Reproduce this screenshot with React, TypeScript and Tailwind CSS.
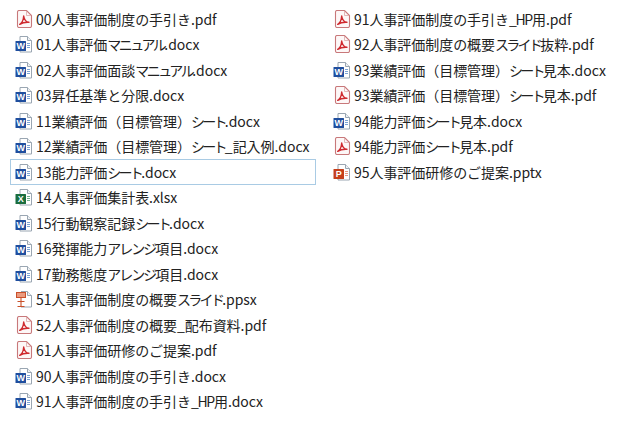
const jp = "font-['Noto_Sans_CJK_JP','Noto_Sans',sans-serif]";

function Pdf() {
  return (
    <svg width="18" height="18" viewBox="0 0 18 18" className="shrink-0">
      <path d="M2.500 2a1.500 1.500 0 0 1 1.500-1.500h7.500l5 5v10.500a1.500 1.500 0 0 1-1.500 1.500h-11a1.500 1.500 0 0 1-1.500-1.500z" fill="#fdf7f7" stroke="#c8787a" strokeWidth="1.100" />
      <path d="M11.500 .8v4.700h4.700" fill="none" stroke="#dca8a8" strokeWidth="0.800" />
      <path d="M4.700 14.300c2.300-1.200 3.700-4.200 4-8.300 .5 3.400 2.200 5.900 5.200 6.300-3.500-.2-6.600 .4-9.200 2z" fill="none" stroke="#cf2a2f" strokeWidth="1.400" strokeLinejoin="round" />
    </svg>
  );
}

function Office({ color, letter, line }: { color: string; letter: string; line: string }) {
  return (
    <svg width="18" height="18" viewBox="0 0 18 18" className="shrink-0">
      <path d="M5 1.500h7.500l4 4v11.500h-11.500z" fill="#fff" stroke="#9aa6b2" strokeWidth="1" />
      <path d="M12.500 1.500v4h4" fill="#eef1f4" stroke="#9aa6b2" strokeWidth="1" />
      <path d="M12 8.500h3M12 10.500h3M12 12.500h3" stroke={line} strokeWidth="1.100" />
      <rect x="0.500" y="6" width="10.500" height="10" rx="0.500" fill={color} />
      <text x="5.750" y="14.300" textAnchor="middle" fontSize="9" fontWeight="700" fill="#fff" fontFamily="Liberation Sans, sans-serif">{letter}</text>
    </svg>
  );
}

function Ppsx() {
  return (
    <svg width="18" height="18" viewBox="0 0 18 18" className="shrink-0">
      <path d="M6 1.500h6.500l4 4v11.500h-10.500" fill="#fff" stroke="#9aa6b2" strokeWidth="1" />
      <path d="M12.500 1.500v4h4" fill="#eef1f4" stroke="#9aa6b2" strokeWidth="1" />
      <rect x="1.500" y="2.500" width="9" height="5" fill="#eb9a7e" stroke="#c9502a" strokeWidth="1" />
      <path d="M6 7.500v9M2.500 11.500h7M2.500 16.500h7" stroke="#c9502a" strokeWidth="1.100" fill="none" />
    </svg>
  );
}

type Kind = "pdf" | "word" | "excel" | "ppt" | "ppsx";

function Icon({ kind }: { kind: Kind }) {
  if (kind === "pdf") return <Pdf />;
  if (kind === "word") return <Office color="#1f4e9e" letter="W" line="#7ba3d4" />;
  if (kind === "excel") return <Office color="#1b6e3e" letter="X" line="#6fb08c" />;
  if (kind === "ppt") return <Office color="#c63f1b" letter="P" line="#e59a85" />;
  return <Ppsx />;
}

const left: [Kind, string, boolean?][] = [
  ["pdf", "00人事評価制度の手引き.pdf"],
  ["word", "01人事評価マニュアル.docx"],
  ["word", "02人事評価面談マニュアル.docx"],
  ["word", "03昇任基準と分限.docx"],
  ["word", "11業績評価（目標管理）シート.docx"],
  ["word", "12業績評価（目標管理）シート_記入例.docx"],
  ["word", "13能力評価シート.docx", true],
  ["excel", "14人事評価集計表.xlsx"],
  ["word", "15行動観察記録シート.docx"],
  ["word", "16発揮能力アレンジ項目.docx"],
  ["word", "17勤務態度アレンジ項目.docx"],
  ["ppsx", "51人事評価制度の概要スライド.ppsx"],
  ["pdf", "52人事評価制度の概要_配布資料.pdf"],
  ["pdf", "61人事評価研修のご提案.pdf"],
  ["word", "90人事評価制度の手引き.docx"],
  ["word", "91人事評価制度の手引き_HP用.docx"],
];

const right: [Kind, string][] = [
  ["pdf", "91人事評価制度の手引き_HP用.pdf"],
  ["pdf", "92人事評価制度の概要スライド抜粋.pdf"],
  ["word", "93業績評価（目標管理）シート見本.docx"],
  ["pdf", "93業績評価（目標管理）シート見本.pdf"],
  ["word", "94能力評価シート見本.docx"],
  ["pdf", "94能力評価シート見本.pdf"],
  ["ppt", "95人事評価研修のご提案.pptx"],
];

const narrow: Record<string, string> = {
  シート: "tracking-[-2.700px]",
  マニュアル: "tracking-[-2.500px]",
  アレンジ: "tracking-[-2px]",
  スライド: "tracking-[-2.700px]",
  _HP: "tracking-[-1.300px]",
};

function Label({ name }: { name: string }) {
  return (
    <span className="text-[14px] leading-none tracking-[-0.050px] text-[#222222]">
      {name.split(/(シート|マニュアル|アレンジ|スライド|_HP)/).map((part, i) =>
        narrow[part] ? (
          <span key={i} className={narrow[part]}>
            {part}
          </span>
        ) : (
          part
        ),
      )}
    </span>
  );
}

function Row({ kind, name, selected }: { kind: Kind; name: string; selected?: boolean }) {
  return (
    <div className={`flex h-[25.500px] items-center gap-[3px] whitespace-nowrap pl-[5px] ${selected ? "outline outline-1 -outline-offset-1 outline-[#a9cbe4]" : ""}`}>
      <Icon kind={kind} />
      <Label name={name} />
    </div>
  );
}

export default function App() {
  return (
    <div className={`grid h-[421px] w-[640px] grid-cols-[306px_1fr] gap-x-[12px] overflow-hidden bg-white pl-[10px] pt-[6px] ${jp}`}>
      <div className="flex flex-col">
        {left.map(([k, n, s]) => (
          <Row key={n} kind={k} name={n} selected={s} />
        ))}
      </div>
      <div className="flex flex-col">
        {right.map(([k, n]) => (
          <Row key={n} kind={k} name={n} />
        ))}
      </div>
    </div>
  );
}
